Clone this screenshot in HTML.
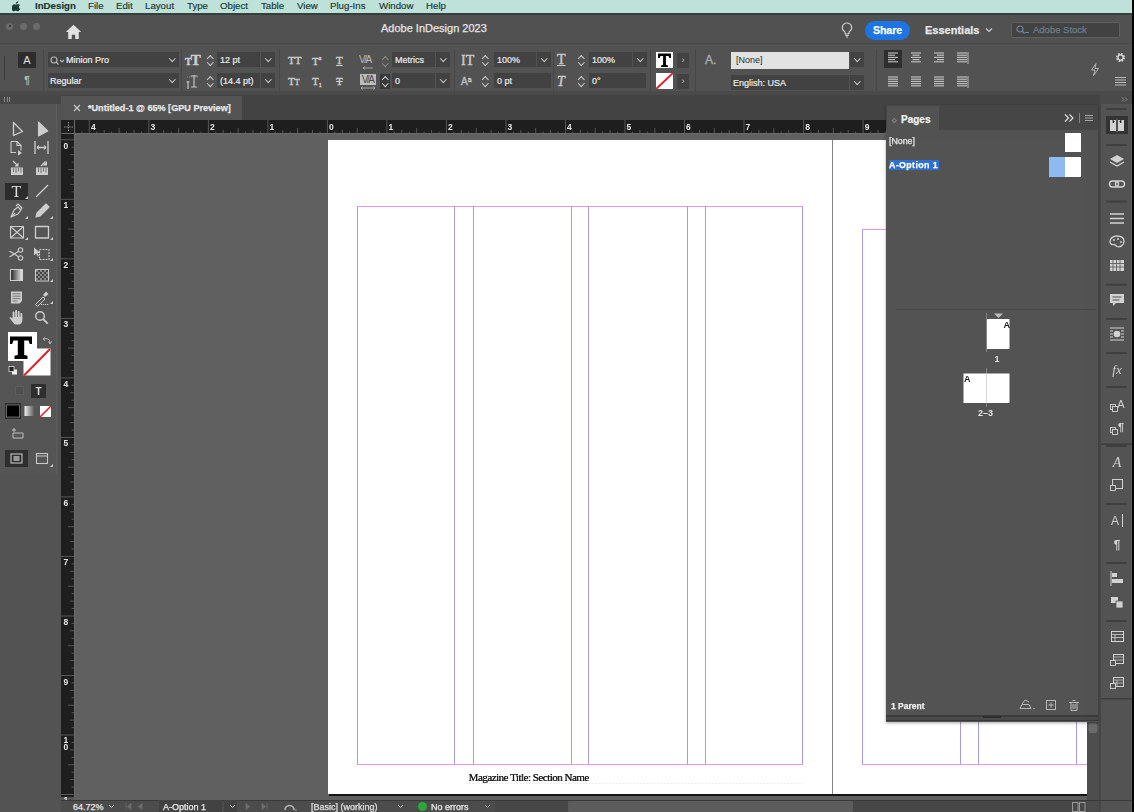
<!DOCTYPE html>
<html><head><meta charset="utf-8">
<style>
*{margin:0;padding:0;box-sizing:border-box}
html,body{-webkit-font-smoothing:antialiased;width:1134px;height:812px;overflow:hidden;background:#535353;font-family:"Liberation Sans",sans-serif;color:#e8e8e8}
.a{position:absolute}
svg{will-change:transform}
#ctl,#appbar,#tab,#pages,#status,#menubar{opacity:0.999}
#pages div,#status div,#tab div,#appbar div,.f{-webkit-text-stroke-width:0.25px}
#menubar{left:0;top:0;width:1134px;height:13px;background:#bfe2db}
#menuline{left:0;top:13px;width:1134px;height:1.5px;background:#33403d}
#menubar span{position:absolute;top:0;font-size:9.7px;-webkit-text-stroke:0.15px #193833;line-height:12.5px;color:#193833}
#appbar{left:0;top:14.5px;width:1134px;height:28.5px;background:#525252}

.f{position:absolute;background:#434343;height:15px;font-size:9px;line-height:17px;color:#ececec;-webkit-text-stroke:0.2px #ececec;padding-left:3px;white-space:nowrap;overflow:hidden}
.dd{position:absolute;background:#434343;height:15px;width:14px}
.dd:after{content:"";position:absolute;left:4.5px;top:4px;width:3.5px;height:3.5px;border-right:1.2px solid #cfcfcf;border-bottom:1.2px solid #cfcfcf;transform:rotate(45deg)}
.st{position:absolute;width:10px;height:15px}
.st:before{content:"";position:absolute;left:2.5px;top:3.5px;width:3.5px;height:3.5px;border-left:1.3px solid #d0d0d0;border-top:1.3px solid #d0d0d0;transform:rotate(45deg)}
.st:after{content:"";position:absolute;left:2.5px;top:7.5px;width:3.5px;height:3.5px;border-right:1.3px solid #d0d0d0;border-bottom:1.3px solid #d0d0d0;transform:rotate(45deg)}
.vs{position:absolute;width:1px;background:#484848}
.ic{position:absolute;color:#cdcdcd;font-family:"Liberation Serif",serif;line-height:1;-webkit-text-stroke:0.4px #cdcdcd}
.tl{width:7px;height:7px;border-radius:50%;background:#6c6c6c}
#ctl{left:0;top:43px;width:1134px;height:51px;background:#535353;border-top:1px solid #474747}
#strip{left:0;top:91px;width:1134px;height:4px;background:#4a4a4a}
#tools{left:0;top:95px;width:61px;height:717px;background:#535353}
#tabbar{left:61px;top:95px;width:1040px;height:25px;background:#434343}
#tab{left:61px;top:96px;width:181px;height:24px;background:#555555}
#hruler{left:61px;top:119px;width:1026px;height:15px;background:#1e1e1e}
#vruler{left:61px;top:134px;width:13px;height:663px;background:#1e1e1e}
#paste{left:74px;top:134px;width:1013px;height:666px;background:#606060}
#page1{left:328px;top:140px;width:504px;height:654px;background:#fff}
#spine{left:832px;top:140px;width:1px;height:654px;background:#6a6a6a}
#page2{left:833px;top:140px;width:254px;height:654px;background:#fff}
#vscroll{left:1087px;top:119px;width:12px;height:678px;background:#4a4a4a}
#rstrip{left:1099px;top:95px;width:35px;height:702px;background:#535353}
#pages{left:886px;top:105px;width:212px;height:617px;background:#535353;box-shadow:0 1px 3px rgba(0,0,0,.35)}
#status{left:61px;top:800px;width:1038px;height:12px;background:#4d4d4d}
</style></head><body>
<div id="menubar" class="a">
<svg class="a" style="left:12px;top:1px" width="9" height="11" viewBox="0 0 9 11"><path d="M6.2 0.2c0.1 0.8-0.3 1.6-0.8 2.1-0.5 0.5-1.2 0.8-1.9 0.7-0.1-0.7 0.3-1.5 0.8-2 0.5-0.5 1.3-0.8 1.9-0.8zM8.6 7.9c-0.3 0.7-0.5 1-0.9 1.6-0.5 0.8-1.3 1.7-2.2 1.7-0.8 0-1-0.5-2.1-0.5-1.1 0-1.3 0.5-2.1 0.5C0.4 11.2-0.4 10.2-0.9 9.4c0 0 0 0 0 0C-2.2 7.2 0.1 3.4 1.6 3.4c0.9 0 1.5 0.5 2.2 0.5 0.7 0 1.1-0.5 2.2-0.5 0.8 0 1.6 0.4 2.1 1.2-1.9 1-1.6 3.7 0.5 4.3z" transform="translate(0.6,0) scale(0.92)" fill="#1d3a35"/></svg>
<span style="left:35px;font-weight:bold">InDesign</span>
<span style="left:88px">File</span>
<span style="left:116px">Edit</span>
<span style="left:145px">Layout</span>
<span style="left:187px">Type</span>
<span style="left:220px">Object</span>
<span style="left:261px">Table</span>
<span style="left:297px">View</span>
<span style="left:330px">Plug-Ins</span>
<span style="left:379px">Window</span>
<span style="left:426px">Help</span>
</div>
<div id="menuline" class="a"></div>
<div id="appbar" class="a">
<div class="a tl" style="left:6px;top:8.3px"></div><div class="a" style="left:8.5px;top:10.8px;width:2px;height:2px;border-radius:1px;background:#2a2a2a"></div>
<div class="a tl" style="left:19.5px;top:8.3px"></div>
<div class="a tl" style="left:32.5px;top:8.3px"></div>
<svg class="a" style="left:65px;top:9px" width="17" height="16" viewBox="0 0 17 16"><path d="M8.5 0.8L0.8 8h2.4v7h3.6v-4.2h3.4V15h3.6V8h2.4z" fill="#e2e2e2"/></svg>
<div class="a" style="left:381px;top:6px;font-size:11px;color:#e6e6e6;line-height:14px">Adobe InDesign 2023</div>
<svg class="a" style="left:841px;top:7px" width="12" height="16" viewBox="0 0 12 16"><path d="M6 1a4.6 4.6 0 0 0-2.6 8.4c0.5 0.4 0.8 1 0.8 1.6V12h3.6v-1c0-0.6 0.3-1.2 0.8-1.6A4.6 4.6 0 0 0 6 1z" fill="none" stroke="#cfcfcf" stroke-width="1.2"/><path d="M4.4 13.5h3.2M5 15h2" stroke="#cfcfcf" stroke-width="1.1"/></svg>
<div class="a" style="left:865px;top:6px;width:45px;height:19px;border-radius:9.5px;background:#1d76e4;color:#fff;font-weight:bold;font-size:10.5px;line-height:19px;text-align:center">Share</div>
<div class="a" style="left:925px;top:7px;font-size:11px;font-weight:bold;color:#e8e8e8;line-height:16px">Essentials</div>
<svg class="a" style="left:985px;top:12px" width="8" height="6" viewBox="0 0 8 6"><path d="M1 1.5l3 3 3-3" fill="none" stroke="#d0d0d0" stroke-width="1.2"/></svg>
<div class="a" style="left:1011px;top:7px;width:109px;height:16px;background:#434343;border:1px solid #606060;border-radius:2px"></div>
<svg class="a" style="left:1016px;top:10px" width="14" height="10" viewBox="0 0 14 10"><circle cx="4" cy="4" r="3" fill="none" stroke="#6f8aa3" stroke-width="1.2"/><path d="M6 6l2.5 2.5M9 7.5h4" stroke="#6f8aa3" stroke-width="1.2"/></svg>
<div class="a" style="left:1033px;top:8px;font-size:9.5px;color:#6d7f8f;line-height:14px">Adobe Stock</div>
</div>
<div id="ctl" class="a">
<div class="a" style="left:4px;top:12px;width:1px;height:24px;background:#3c3c3c"></div>
<div class="a" style="left:18px;top:8px;width:18px;height:16px;background:#2e2e2e;border-radius:1px"></div>
<div class="a" style="left:18px;top:9px;width:18px;font-size:11px;line-height:14px;color:#e0e0e0;text-align:center">A</div>
<div class="a" style="left:18px;top:31px;width:18px;font-size:10px;line-height:12px;color:#bdbdbd;text-align:center;font-weight:bold">&para;</div>
<div class="vs" style="left:43px;top:5px;height:42px"></div>
<div class="f" style="left:48px;top:8px;width:117px;padding-left:18px">Minion Pro</div>
<svg class="a" style="left:50px;top:12px" width="16" height="10" viewBox="0 0 16 10"><circle cx="4" cy="4" r="3" fill="none" stroke="#bbb" stroke-width="1.1"/><path d="M6.2 6.2l2.3 2.3M10 4l2 2 2-2" fill="none" stroke="#bbb" stroke-width="1.1"/></svg>
<div class="dd" style="left:165px;top:8px"></div>
<div class="f" style="left:48px;top:29px;width:117px;padding-left:2px">Regular</div>
<div class="dd" style="left:165px;top:29px"></div>
<div class="vs" style="left:181px;top:5px;height:42px"></div>
<div class="ic" style="left:185px;top:9px;font-size:15px;letter-spacing:-1px;font-weight:bold;color:#cfcfcf"><span style="font-size:10px">T</span>T</div>
<svg class="a" style="left:185px;top:29px" width="16" height="17" viewBox="0 0 16 17"><path d="M9 2v12M5.5 3h7M6 14h6M3 8v8M1.5 9h3" stroke="#c4c4c4" stroke-width="1.2" fill="none"/><path d="M2 4h12" stroke="#9a9a9a" stroke-width="0.8" stroke-dasharray="1 1"/></svg>
<div class="st" style="left:205px;top:8px"></div>
<div class="f" style="left:217px;top:8px;width:43px">12 pt</div>
<div class="dd" style="left:261px;top:8px"></div>
<div class="st" style="left:205px;top:29px"></div>
<div class="f" style="left:217px;top:29px;width:43px">(14.4 pt)</div>
<div class="dd" style="left:261px;top:29px"></div>
<div class="vs" style="left:279px;top:5px;height:42px"></div>
<div class="ic" style="left:288px;top:11px;font-size:11px;letter-spacing:0px">TT</div>
<div class="ic" style="left:312px;top:11px;font-size:11px">T<span style="font-size:6px;vertical-align:5px">a</span></div>
<div class="ic" style="left:336px;top:11px;font-size:11px;text-decoration:underline">T</div>
<div class="ic" style="left:288px;top:32px;font-size:11px">T<span style="font-size:8px">T</span></div>
<div class="ic" style="left:312px;top:32px;font-size:11px">T<span style="font-size:6px;vertical-align:-2px">1</span></div>
<div class="ic" style="left:336px;top:32px;font-size:11px;text-decoration:line-through">T</div>
<div class="a" style="left:359px;top:10px;font-size:10px;color:#bdbdbd;letter-spacing:-1.5px;line-height:12px">V/A</div>
<svg class="a" style="left:362px;top:22px" width="12" height="4" viewBox="0 0 12 4"><path d="M1 2h10M1 2l2-1.5M1 2l2 1.5" stroke="#aaa" stroke-width="0.9" fill="none"/></svg>
<div class="a" style="left:360px;top:30px;width:16px;height:11px;background:#bdbdbd"></div>
<div class="a" style="left:359px;top:30px;width:17px;font-size:10px;color:#4a4a4a;letter-spacing:-1.5px;line-height:11px;text-align:center">V/A</div>
<svg class="a" style="left:360px;top:42px" width="16" height="4" viewBox="0 0 16 4"><path d="M1 2h14M1 2l2-1.5M1 2l2 1.5M15 2l-2-1.5M15 2l-2 1.5" stroke="#aaa" stroke-width="0.9" fill="none"/></svg>
<div class="st" style="left:380px;top:9px;opacity:.45"></div>
<div class="f" style="left:392px;top:8px;width:43px">Metrics</div>
<div class="dd" style="left:436px;top:8px"></div>
<div class="a" style="left:380px;top:30px;width:10px;height:15px;background:#3a3a3a"></div>
<div class="st" style="left:380px;top:29px"></div>
<div class="f" style="left:392px;top:29px;width:43px">0</div>
<div class="dd" style="left:436px;top:29px"></div>
<div class="vs" style="left:454px;top:5px;height:42px"></div>
<div class="ic" style="left:461px;top:10px;font-size:14px">IT</div>
<div class="ic" style="left:461px;top:32px;font-size:10px;font-family:'Liberation Sans',sans-serif;color:#a8a8a8">A<span style="font-size:7px;vertical-align:3px">a</span></div>
<div class="st" style="left:480px;top:8px"></div>
<div class="f" style="left:494px;top:8px;width:42px">100%</div>
<div class="dd" style="left:537px;top:8px"></div>
<div class="st" style="left:480px;top:29px"></div>
<div class="f" style="left:494px;top:29px;width:57px">0 pt</div>
<div class="vs" style="left:553px;top:5px;height:42px"></div>
<div class="ic" style="left:557px;top:9px;font-size:14px;text-decoration:underline">T</div>
<div class="ic" style="left:557px;top:31px;font-size:14px;font-style:italic">T</div>
<div class="st" style="left:576px;top:8px"></div>
<div class="f" style="left:589px;top:8px;width:43px">100%</div>
<div class="dd" style="left:633px;top:8px"></div>
<div class="st" style="left:576px;top:29px"></div>
<div class="f" style="left:589px;top:29px;width:57px">0&deg;</div>
<div class="vs" style="left:650px;top:5px;height:42px"></div>
<div class="a" style="left:656px;top:8px;width:17px;height:16px;background:#fff"></div>
<svg class="a" style="left:656px;top:8px" width="17" height="16" viewBox="0 0 17 16"><path d="M2 1.5h13v4.5h-1.6l-.9-2h-2.6v8.8l2 .6v1.6H5.1v-1.6l2-.6V4H4.5l-.9 2H2z" fill="#000"/></svg>
<div class="a" style="left:677px;top:9px;width:12px;height:15px;background:#434343;font-size:9px;line-height:15px;text-align:center;color:#ccc">&rsaquo;</div>
<svg class="a" style="left:656px;top:29px" width="17" height="16" viewBox="0 0 17 16"><rect width="17" height="16" fill="#fff"/><path d="M0 16L17 0" stroke="#e0202a" stroke-width="2"/></svg>
<div class="a" style="left:677px;top:30px;width:12px;height:15px;background:#434343;font-size:9px;line-height:15px;text-align:center;color:#ccc">&rsaquo;</div>
<div class="vs" style="left:695px;top:5px;height:42px"></div>
<div class="a" style="left:705px;top:10px;font-size:12px;color:#b0b0b0;line-height:12px;-webkit-text-stroke:0.3px #b0b0b0">A.</div>
<div class="a" style="left:731px;top:8px;width:118px;height:17px;background:#e3e3e3;font-size:9px;line-height:17px;color:#2a2a2a;padding-left:5px">[None]</div>
<div class="dd" style="left:850px;top:8px"></div>
<div class="f" style="left:731px;top:31px;width:118px;padding-left:2px">English: USA</div>
<div class="dd" style="left:850px;top:31px"></div>
<div class="vs" style="left:876px;top:5px;height:42px"></div>
<div class="a" style="left:884px;top:6px;width:18px;height:18px;background:#2f2f2f;border-radius:1px"></div>
<svg class="a" style="left:888px;top:8px" width="12" height="12" viewBox="0 0 12 12"><g stroke="#c6c6c6" stroke-width="1.1"><path d="M0 1.0h10" /><path d="M0 3.2h7" /><path d="M0 5.4h10" /><path d="M0 7.6000000000000005h7" /><path d="M0 9.8h10" /></g></svg><svg class="a" style="left:911px;top:8px" width="12" height="12" viewBox="0 0 12 12"><g stroke="#c6c6c6" stroke-width="1.1"><path d="M0.0 1.0h10" /><path d="M1.5 3.2h7" /><path d="M0.0 5.4h10" /><path d="M1.5 7.6000000000000005h7" /><path d="M0.0 9.8h10" /></g></svg><svg class="a" style="left:934px;top:8px" width="12" height="12" viewBox="0 0 12 12"><g stroke="#c6c6c6" stroke-width="1.1"><path d="M0 1.0h10" /><path d="M3 3.2h7" /><path d="M0 5.4h10" /><path d="M3 7.6000000000000005h7" /><path d="M0 9.8h10" /></g></svg><svg class="a" style="left:957px;top:8px" width="12" height="12" viewBox="0 0 12 12"><g stroke="#c6c6c6" stroke-width="1.1"><path d="M0 1.0h10" /><path d="M0 3.2h10" /><path d="M0 5.4h10" /><path d="M0 7.6000000000000005h10" /><path d="M0 9.8h10" /><path d="M11 0v12" stroke-width="0.9"/></g></svg><svg class="a" style="left:888px;top:32px" width="12" height="12" viewBox="0 0 12 12"><g stroke="#c6c6c6" stroke-width="1.1"><path d="M0 1.0h10" /><path d="M0 3.2h10" /><path d="M0 5.4h10" /><path d="M0 7.6000000000000005h10" /><path d="M0 9.8h10" /></g></svg><svg class="a" style="left:911px;top:32px" width="12" height="12" viewBox="0 0 12 12"><g stroke="#c6c6c6" stroke-width="1.1"><path d="M0 1.0h10" /><path d="M0 3.2h10" /><path d="M0 5.4h10" /><path d="M0 7.6000000000000005h10" /><path d="M0 9.8h10" /></g></svg><svg class="a" style="left:934px;top:32px" width="12" height="12" viewBox="0 0 12 12"><g stroke="#c6c6c6" stroke-width="1.1"><path d="M0 1.0h10" /><path d="M0 3.2h10" /><path d="M0 5.4h10" /><path d="M0 7.6000000000000005h10" /><path d="M0 9.8h10" /></g></svg><svg class="a" style="left:957px;top:32px" width="12" height="12" viewBox="0 0 12 12"><g stroke="#c6c6c6" stroke-width="1.1"><path d="M0 1.0h10" /><path d="M0 3.2h10" /><path d="M0 5.4h10" /><path d="M0 7.6000000000000005h10" /><path d="M0 9.8h10" /><path d="M11 0v12" stroke-width="0.9"/></g></svg>
<svg class="a" style="left:1090px;top:19px" width="10" height="13" viewBox="0 0 10 13"><path d="M6 0.5L1.5 7h3.5L3.5 12.5 8.5 5.5H5z" fill="none" stroke="#bdbdbd" stroke-width="0.9"/></svg>
<svg class="a" style="left:1115px;top:8px" width="11" height="11" viewBox="0 0 11 11"><circle cx="5.5" cy="5.5" r="3.4" fill="none" stroke="#d5d5d5" stroke-width="2.2" stroke-dasharray="1.6 1.07"/><circle cx="5.5" cy="5.5" r="2.6" fill="none" stroke="#d5d5d5" stroke-width="1.2"/></svg>
<svg class="a" style="left:1115px;top:32px" width="11" height="10" viewBox="0 0 11 10"><path d="M0 1.5h11M0 4h11M0 6.5h11M0 9h11" stroke="#bdbdbd" stroke-width="1.1"/></svg>
</div>
<div id="strip" class="a"></div>
<div id="tools" class="a">
<div class="a" style="left:0;top:0;width:61px;height:9px;background:#474747"></div>
<div class="a" style="left:4px;top:2px;width:1px;height:5px;background:#888"></div><div class="a" style="left:7px;top:2px;width:3px;height:5px;border-left:1px solid #888;border-right:1px solid #888"></div>
<div class="a" style="left:20px;top:14px;width:20px;height:2px;background:#3c3c3c;border-radius:1px"></div>
<div class="a" style="left:0;top:9px;width:57px;height:371px;background:#555555;border-right:1px solid #5d5d5d"></div>
<svg class="a" style="left:0;top:0" width="61" height="400" viewBox="0 95 61 400">
<g fill="none" stroke="#cdcdcd" stroke-width="1.1" stroke-linejoin="round">
<path d="M13.5 122.5V135.5l9-4z" stroke-width="1.3"/>
<path d="M38.5 122V136l9.2-5z" fill="#cdcdcd"/>
<path d="M11 141.5h6l4 4v5M11 141.5v11h5" /><path d="M17 141.5v4h4"/><path d="M18 150l4 3-4 2.5z" fill="#cdcdcd" stroke="none"/>
<path d="M35 141v13M48 141v13M37 147.5h9" stroke-width="1.3"/><path d="M37 147.5l2-1.8M37 147.5l2 1.8M46 147.5l-2-1.8M46 147.5l-2 1.8"/>
<path d="M11 167.5h12v7.5h-12z" fill="#cdcdcd" stroke="none"/><path d="M13.5 168v4M16 168v5M18.5 168v3.5M21 168v4.5" stroke="#666" stroke-width="0.9"/><path d="M13 161l4.5 4.5" stroke-width="1.3"/><path d="M18.5 162.5v4h-4z" fill="#cdcdcd" stroke="none"/>
<path d="M36 167.5h12v7.5h-12z" fill="#cdcdcd" stroke="none"/><path d="M38.5 168v4M41 168v5M43.5 168v3.5M46 168v4.5" stroke="#666" stroke-width="0.9"/><path d="M41 166l4.5-4.5" stroke-width="1.3"/><path d="M47 161v4.5h-4.5z" fill="#cdcdcd" stroke="none"/>
<path d="M36 197l12-12" stroke-width="1.2"/>
<path d="M11 217l3-7 4-3 3 3-3 4z"/><path d="M16 206l2-2 4 4-2 2"/><path d="M11 217l4-4"/>
<path d="M36 217l1-4 9-9 3 3-9 9z" fill="#cdcdcd"/>
<rect x="10.5" y="226.5" width="13" height="11.5"/><path d="M10.5 226.5l13 11.5M23.5 226.5l-13 11.5"/>
<rect x="35.5" y="226.5" width="13" height="11.5" stroke-width="1.3"/>
<circle cx="20.5" cy="250" r="2.2"/><circle cx="20.5" cy="258" r="2.2"/><path d="M18.6 251.2L9.5 257M18.6 256.8L9.5 251" stroke-width="1.2"/>
<path d="M39.5 249.5h9.5v10h-9.5z" stroke-dasharray="2 1"/><path d="M34 247.5v8l2.2-2 1.6 3 1.2-.6-1.5-2.8h3z" fill="#cdcdcd" stroke="none"/>
<rect x="10.5" y="269.5" width="12" height="11" fill="url(#gr)"/>
<rect x="35.5" y="269.5" width="13" height="11.5" fill="#444"/><path d="M36 270h2v2h-2zM40 270h2v2h-2zM44 270h2v2h-2zM38 272h2v2h-2zM42 272h2v2h-2zM46 272h2v2h-2zM36 274h2v2h-2zM40 274h2v2h-2zM44 274h2v2h-2zM38 276h2v2h-2zM42 276h2v2h-2zM46 276h2v2h-2zM36 278h2v2h-2zM40 278h2v2h-2zM44 278h2v2h-2z" fill="#8a8a8a" stroke="none"/>
<path d="M11 291.5h11v9.5l-2.5 2.5H11z" fill="#cdcdcd" stroke="none"/><path d="M12.5 293.8h8M12.5 296.2h8M12.5 298.6h8M12.5 301h5" stroke="#6a6a6a" stroke-width="0.9"/>
<path d="M35.5 304.5l7.5-7.5 2 2-7.5 7.5z" stroke-width="1"/><path d="M43 295l3-3.5 2.5 2.5-3.5 3z" fill="#cdcdcd" stroke="none"/><path d="M41 304.5h8" stroke-dasharray="1.2 0.8" stroke-width="1.2"/>
<g fill="#cdcdcd" stroke="none"><rect x="12.6" y="311.5" width="1.9" height="8" rx="0.9"/><rect x="15.2" y="310" width="1.9" height="9" rx="0.9"/><rect x="17.8" y="311" width="1.9" height="8.5" rx="0.9"/><rect x="20.4" y="313" width="1.9" height="7" rx="0.9"/><path d="M12.6 317h9.7v3.5c0 2-1.5 4-3.5 4h-3c-1.5 0-2.5-1.5-3.5-3l-2.6-3.2c-.5-.7.4-1.5 1.1-1l1.8 1.4z"/></g>
<circle cx="40" cy="316" r="4.3" stroke-width="1.4"/><path d="M43.2 319.2l4.5 4.5" stroke-width="1.9"/>
</g>
<defs><linearGradient id="gr"><stop offset="0" stop-color="#222"/><stop offset="1" stop-color="#eee"/></linearGradient></defs>
<g fill="#cdcdcd">
<path d="M28 199l-3 0 3-3z"/><path d="M28 219l-3 0 3-3z"/><path d="M53 219l-3 0 3-3z"/><path d="M28 240l-3 0 3-3z"/><path d="M53 240l-3 0 3-3z"/><path d="M53 261l-3 0 3-3z"/><path d="M53 282l-3 0 3-3z"/><path d="M53 304l-3 0 3-3z"/>
</g>
</svg>
<div class="a" style="left:5px;top:88px;width:23px;height:17px;background:#2c2c2c"></div>
<div class="a" style="left:5px;top:88px;width:23px;font-family:'Liberation Serif',serif;font-size:16px;line-height:18px;color:#dedede;text-align:center">T</div>
<svg class="a" style="left:0;top:0" width="61" height="400" viewBox="0 95 61 400">
<path d="M28 199l-3 0 3-3z" fill="#cdcdcd"/>
<rect x="23.5" y="348.5" width="27" height="27" fill="#fff"/><path d="M24 375.5l26-26.5" stroke="#e0202a" stroke-width="2"/>
<rect x="8" y="332" width="29" height="29" fill="#fff"/>
<path d="M10 336.5h22v7.5h-2.2l-1.3-3.5h-4.3v14.5l3.3 0.8v3.2h-13v-3.2l3.3-0.8v-14.5h-4.3l-1.3 3.5H10z" fill="#000"/>
<path d="M44 339c3-1 6 0 6 4M48.5 341.5l1.5 2.5 1.5-2.5M45 337.5l-2 1.5 2 1.5" fill="none" stroke="#bbb" stroke-width="1"/>
<rect x="12" y="369.5" width="5" height="5" fill="#eee"/><rect x="9" y="366.5" width="5" height="5" fill="#222" stroke="#ddd" stroke-width="0.8"/>
<rect x="15.5" y="386.5" width="8" height="8" fill="#4f4f4f" stroke="#5d5d5d"/>
<rect x="31" y="384" width="15" height="14" fill="#2e2e2e"/>
<text x="38.5" y="395" font-family="Liberation Sans" font-size="10" font-weight="bold" fill="#ddd" text-anchor="middle">T</text>
<rect x="5" y="403" width="16" height="16" fill="#2e2e2e"/><rect x="6.5" y="405" width="13" height="12" fill="#000" stroke="#777" stroke-width="0.8"/>
<rect x="24.5" y="406" width="10" height="10" fill="url(#gr2)"/>
<rect x="40" y="406" width="11" height="11" fill="#fff"/><path d="M40 417l11-11" stroke="#e0202a" stroke-width="1.6"/>
<defs><linearGradient id="gr2"><stop offset="0" stop-color="#eee"/><stop offset="1" stop-color="#555"/></linearGradient></defs>
<g fill="none" stroke="#c0c0c0" stroke-width="1"><path d="M12 430h4M14 428v4M13 433h10v5h-10z"/></g>
<rect x="5" y="450" width="23" height="17" fill="#2e2e2e"/>
<rect x="11" y="454" width="11" height="9" fill="none" stroke="#c6c6c6" stroke-width="1.1"/><rect x="13.5" y="456" width="6" height="5" fill="#9a9a9a"/>
<rect x="36.5" y="453.5" width="11" height="10" fill="none" stroke="#c6c6c6" stroke-width="1.1"/><path d="M36.5 456h11" stroke="#c6c6c6"/><path d="M53 467l-3 0 3-3z" fill="#cdcdcd"/>
</svg>
</div>
<div id="tabbar" class="a"></div>
<div id="tab" class="a">
<svg class="a" style="left:12px;top:8px" width="8" height="8" viewBox="0 0 8 8"><path d="M1 1l6 6M7 1L1 7" stroke="#cfcfcf" stroke-width="1.1"/></svg>
<div class="a" style="left:27px;top:5px;font-size:9.1px;font-weight:bold;color:#e8e8e8;line-height:14px;white-space:nowrap">*Untitled-1 @ 65% [GPU Preview]</div>
</div>

<div id="paste" class="a"></div>
<svg class="a" style="left:0;top:0" width="1134" height="812" viewBox="0 0 1134 812">
<rect x="61" y="120" width="1026" height="13" fill="#1e1e1e"/>
<rect x="61" y="134" width="13" height="663" fill="#1e1e1e"/>
<rect x="61" y="133" width="1026" height="1" fill="#6a6a6a"/>
<rect x="74" y="134" width="1" height="663" fill="#6a6a6a"/>
<path d="M81.9 131.5V133M89.3 120V133M96.8 131.5V133M104.2 130V133M111.6 131.5V133M119.1 128V133M126.5 131.5V133M134.0 130V133M141.4 131.5V133M148.8 120V133M156.3 131.5V133M163.7 130V133M171.2 131.5V133M178.6 128V133M186.0 131.5V133M193.5 130V133M200.9 131.5V133M208.4 120V133M215.8 131.5V133M223.2 130V133M230.7 131.5V133M238.1 128V133M245.6 131.5V133M253.0 130V133M260.4 131.5V133M267.9 120V133M275.3 131.5V133M282.8 130V133M290.2 131.5V133M297.6 128V133M305.1 131.5V133M312.5 130V133M320.0 131.5V133M327.4 120V133M334.8 131.5V133M342.3 130V133M349.7 131.5V133M357.2 128V133M364.6 131.5V133M372.0 130V133M379.5 131.5V133M386.9 120V133M394.4 131.5V133M401.8 130V133M409.2 131.5V133M416.7 128V133M424.1 131.5V133M431.6 130V133M439.0 131.5V133M446.4 120V133M453.9 131.5V133M461.3 130V133M468.8 131.5V133M476.2 128V133M483.6 131.5V133M491.1 130V133M498.5 131.5V133M506.0 120V133M513.4 131.5V133M520.8 130V133M528.3 131.5V133M535.7 128V133M543.2 131.5V133M550.6 130V133M558.0 131.5V133M565.5 120V133M572.9 131.5V133M580.4 130V133M587.8 131.5V133M595.2 128V133M602.7 131.5V133M610.1 130V133M617.6 131.5V133M625.0 120V133M632.4 131.5V133M639.9 130V133M647.3 131.5V133M654.8 128V133M662.2 131.5V133M669.6 130V133M677.1 131.5V133M684.5 120V133M692.0 131.5V133M699.4 130V133M706.8 131.5V133M714.3 128V133M721.7 131.5V133M729.2 130V133M736.6 131.5V133M744.0 120V133M751.5 131.5V133M758.9 130V133M766.4 131.5V133M773.8 128V133M781.2 131.5V133M788.7 130V133M796.1 131.5V133M803.6 120V133M811.0 131.5V133M818.4 130V133M825.9 131.5V133M833.3 128V133M840.8 131.5V133M848.2 130V133M855.6 131.5V133M863.1 120V133M870.5 131.5V133M878.0 130V133M885.4 131.5V133M892.8 128V133M900.3 131.5V133M907.7 130V133M915.2 131.5V133M922.6 120V133M930.0 131.5V133M937.5 130V133M944.9 131.5V133M952.4 128V133M959.8 131.5V133M967.2 130V133M974.7 131.5V133M982.1 120V133M989.6 131.5V133M997.0 130V133M1004.4 131.5V133M1011.9 128V133M1019.3 131.5V133M1026.8 130V133M1034.2 131.5V133M1041.6 120V133M1049.1 131.5V133M1056.5 130V133M1064.0 131.5V133M1071.4 128V133M1078.8 131.5V133M61 139.8H74M71.5 147.2H74M70 154.7H74M71.5 162.1H74M68 169.6H74M71.5 177.0H74M70 184.4H74M71.5 191.9H74M61 199.3H74M71.5 206.8H74M70 214.2H74M71.5 221.6H74M68 229.1H74M71.5 236.5H74M70 244.0H74M71.5 251.4H74M61 258.8H74M71.5 266.3H74M70 273.7H74M71.5 281.2H74M68 288.6H74M71.5 296.0H74M70 303.5H74M71.5 310.9H74M61 318.4H74M71.5 325.8H74M70 333.2H74M71.5 340.7H74M68 348.1H74M71.5 355.6H74M70 363.0H74M71.5 370.4H74M61 377.9H74M71.5 385.3H74M70 392.8H74M71.5 400.2H74M68 407.6H74M71.5 415.1H74M70 422.5H74M71.5 430.0H74M61 437.4H74M71.5 444.8H74M70 452.3H74M71.5 459.7H74M68 467.2H74M71.5 474.6H74M70 482.0H74M71.5 489.5H74M61 496.9H74M71.5 504.4H74M70 511.8H74M71.5 519.2H74M68 526.7H74M71.5 534.1H74M70 541.6H74M71.5 549.0H74M61 556.4H74M71.5 563.9H74M70 571.3H74M71.5 578.8H74M68 586.2H74M71.5 593.6H74M70 601.1H74M71.5 608.5H74M61 616.0H74M71.5 623.4H74M70 630.8H74M71.5 638.3H74M68 645.7H74M71.5 653.2H74M70 660.6H74M71.5 668.0H74M61 675.5H74M71.5 682.9H74M70 690.4H74M71.5 697.8H74M68 705.2H74M71.5 712.7H74M70 720.1H74M71.5 727.6H74M61 735.0H74M71.5 742.4H74M70 749.9H74M71.5 757.3H74M68 764.8H74M71.5 772.2H74M70 779.6H74M71.5 787.1H74M61 794.5H74" stroke="#5c5c5c" stroke-width="0.9" fill="none"/>
<g font-family="Liberation Sans" font-size="8.5" font-weight="bold" fill="#e6e6e6"><text x="90.9" y="130" >4</text><text x="150.4" y="130" >3</text><text x="210.0" y="130" >2</text><text x="269.5" y="130" >1</text><text x="329.0" y="130" >0</text><text x="388.5" y="130" >1</text><text x="448.0" y="130" >2</text><text x="507.6" y="130" >3</text><text x="567.1" y="130" >4</text><text x="626.6" y="130" >5</text><text x="686.1" y="130" >6</text><text x="745.6" y="130" >7</text><text x="805.2" y="130" >8</text><text x="864.7" y="130" >9</text><text x="924.2" y="130" >10</text><text x="983.7" y="130" >11</text><text x="1043.2" y="130" >12</text><text x="63.5" y="148.8">0</text><text x="63.5" y="208.3">1</text><text x="63.5" y="267.8">2</text><text x="63.5" y="327.4">3</text><text x="63.5" y="386.9">4</text><text x="63.5" y="446.4">5</text><text x="63.5" y="505.9">6</text><text x="63.5" y="565.4">7</text><text x="63.5" y="625.0">8</text><text x="63.5" y="684.5">9</text><text x="63.5" y="743.0">1</text><text x="63.5" y="750.0">0</text><text x="63.5" y="802.5">1</text><text x="63.5" y="809.5">1</text></g>
<rect x="61" y="120" width="14" height="14" fill="#1e1e1e"/><path d="M64 127h9M68.5 122v10" stroke="#9a9a9a" stroke-width="0.9" stroke-dasharray="1.5 1"/><path d="M61.5 133.5h13.5M74.5 120v14" stroke="#6a6a6a"/>
</svg>
<svg class="a" style="left:0;top:0" width="1134" height="812" viewBox="0 0 1134 812">
<rect x="329" y="794" width="758" height="2" fill="#151515"/>
<rect x="328" y="140" width="504" height="654" fill="#fff"/>
<rect x="833" y="140" width="254" height="654" fill="#fff"/>
<rect x="832" y="140" width="1" height="654" fill="#858585"/>
<path d="M357 206.5H803M357 764.5H803" stroke="#e49ae9" stroke-width="1" fill="none"/>
<path d="M357.5 206.5V764.5M454.5 206.5V764.5M473.5 206.5V764.5M571.5 206.5V764.5M588.5 206.5V764.5M687.5 206.5V764.5M705.5 206.5V764.5M802.5 206.5V764.5" stroke="#ab99e6" stroke-width="1" fill="none"/>
<path d="M862 229.5H1087M862 764.5H1087" stroke="#e49ae9" stroke-width="1" fill="none"/>
<path d="M862.5 229.5V764.5M960.5 229.5V764.5M978.5 229.5V764.5M1076.5 229.5V764.5" stroke="#ab99e6" stroke-width="1" fill="none"/>
<path d="M466 783.5H803" stroke="#dfe4f2" stroke-width="0.8" stroke-dasharray="1.5 1.5" fill="none"/>
</svg>
<div class="a" style="left:468.5px;top:770px;font-family:'Liberation Serif',serif;font-size:11px;letter-spacing:-0.5px;color:#1a1a1a;line-height:14px;white-space:nowrap;text-shadow:0.35px 0 0 #1a1a1a">Magazine Title: Section Name</div>
<svg class="a" style="left:0;top:0" width="1134" height="812" viewBox="0 0 1134 812">
<rect x="1087" y="120" width="12" height="680" fill="#4e4e4e"/>
<rect x="1088.5" y="723" width="9" height="10" rx="3" fill="#6a6a6a"/>
</svg>
<svg class="a" style="left:0;top:0" width="1134" height="812" viewBox="0 0 1134 812">
<rect x="1099" y="95" width="35" height="717" fill="#535353"/>
<rect x="1099" y="95" width="2" height="717" fill="#474747"/>
<rect x="1131" y="95" width="1" height="717" fill="#5c5c5c"/>
<rect x="1101" y="95" width="31" height="9" fill="#4a4a4a"/>
<path d="M1122 97.5l2 2-2 2M1125 97.5l2 2-2 2" stroke="#999" stroke-width="0.8" fill="none"/>
<rect x="1106" y="108" width="21" height="2" rx="1" fill="#3f3f3f"/>
<rect x="1106" y="144" width="21" height="2" rx="1" fill="#3f3f3f"/>
<rect x="1106" y="200.6" width="21" height="2" rx="1" fill="#3f3f3f"/>
<rect x="1106" y="283.8" width="21" height="2" rx="1" fill="#3f3f3f"/>
<rect x="1106" y="318" width="21" height="2" rx="1" fill="#3f3f3f"/>
<rect x="1106" y="352" width="21" height="2" rx="1" fill="#3f3f3f"/>
<rect x="1106" y="386" width="21" height="2" rx="1" fill="#3f3f3f"/>
<rect x="1106" y="445" width="21" height="2" rx="1" fill="#3f3f3f"/>
<rect x="1106" y="503" width="21" height="2" rx="1" fill="#3f3f3f"/>
<rect x="1106" y="562" width="21" height="2" rx="1" fill="#3f3f3f"/>
<rect x="1106" y="620" width="21" height="2" rx="1" fill="#3f3f3f"/>
<rect x="1101" y="443.5" width="31" height="1.5" fill="#3e3e3e"/>
<rect x="1101" y="698" width="31" height="1.5" fill="#3e3e3e"/>
<rect x="1106" y="116" width="22" height="18" fill="#333"/>
<path d="M1110 120h6v11h-6zM1118 120h6v11h-6z" fill="#d2d2d2"/><path d="M1113 120v3l1.5-1.5M1121 120v3l-1.5-1.5" stroke="#333" stroke-width="0.8"/><path d="M1117 118v15" stroke="#777" stroke-width="0.8"/>
<path d="M1117 155l7 4-7 4-7-4z" fill="#d2d2d2"/><path d="M1110 162l7 4 7-4" fill="none" stroke="#d2d2d2" stroke-width="1.4"/>
<rect x="1109.5" y="181" width="9" height="6" rx="3" fill="none" stroke="#d2d2d2" stroke-width="1.4"/><rect x="1115.5" y="181" width="9" height="6" rx="3" fill="none" stroke="#d2d2d2" stroke-width="1.4"/>
<path d="M1110 214h14M1110 218.5h14M1110 223h14" stroke="#d2d2d2" stroke-width="1.6"/>
<path d="M1117 236c-4 0-7 2.5-7 5.5 0 2.5 2 3.5 3.5 3 1.5-.5 2 1 3.5 2 3 1 7-1 7-5s-3-5.5-7-5.5z" fill="none" stroke="#d2d2d2" stroke-width="1.3"/><circle cx="1114" cy="240" r="1" fill="#d2d2d2"/><circle cx="1118" cy="239" r="1" fill="#d2d2d2"/><circle cx="1121" cy="242" r="1" fill="#d2d2d2"/>
<rect x="1110" y="260" width="14" height="11" fill="#d2d2d2"/><path d="M1113 260v11M1116.5 260v11M1120 260v11M1110 263.5h14M1110 267h14" stroke="#535353" stroke-width="0.8"/>
<path d="M1110 294h14v9h-8l-3 3v-3h-3z" fill="#d2d2d2"/><path d="M1112.5 297h9M1112.5 300h7" stroke="#535353" stroke-width="1"/>
<path d="M1110 328h14M1110 331h3M1121 331h3M1110 334h3M1121 334h3M1110 337h3M1121 337h3M1110 340h14" stroke="#d2d2d2" stroke-width="1"/><circle cx="1117" cy="334" r="3.3" fill="#d2d2d2"/>
<text x="1117" y="374" font-family="Liberation Serif" font-style="italic" font-size="13" fill="#d2d2d2" text-anchor="middle">fx</text>
<text x="1121" y="408" font-family="Liberation Sans" font-size="11" fill="#d2d2d2" text-anchor="middle">A</text><rect x="1110.5" y="404.5" width="5" height="5" fill="none" stroke="#d2d2d2" stroke-width="0.9"/><rect x="1112.5" y="406.5" width="5" height="5" fill="#535353" stroke="#d2d2d2" stroke-width="0.9"/>
<text x="1121" y="431" font-family="Liberation Sans" font-weight="bold" font-size="11" fill="#d2d2d2" text-anchor="middle">&#182;</text><rect x="1110.5" y="427.5" width="5" height="5" fill="none" stroke="#d2d2d2" stroke-width="0.9"/><rect x="1112.5" y="429.5" width="5" height="5" fill="#535353" stroke="#d2d2d2" stroke-width="0.9"/>
<text x="1117" y="467" font-family="Liberation Serif" font-style="italic" font-size="14" fill="#d2d2d2" text-anchor="middle">A</text>
<rect x="1112.5" y="479.5" width="10" height="9" fill="none" stroke="#d2d2d2" stroke-width="1"/><rect x="1110.5" y="485.5" width="5" height="5" fill="#535353" stroke="#d2d2d2" stroke-width="0.9"/>
<text x="1115" y="525" font-family="Liberation Sans" font-size="12" fill="#d2d2d2" text-anchor="middle">A</text><path d="M1122.5 514v13" stroke="#d2d2d2" stroke-width="1"/>
<text x="1117" y="549" font-family="Liberation Sans" font-weight="bold" font-size="12" fill="#d2d2d2" text-anchor="middle">&#182;</text>
<path d="M1111 571v15" stroke="#d2d2d2" stroke-width="1"/><rect x="1112" y="573" width="5" height="4" fill="#d2d2d2"/><rect x="1112" y="579" width="11" height="4" fill="#d2d2d2"/>
<rect x="1111" y="597" width="7" height="6" fill="#d2d2d2"/><rect x="1116" y="601" width="7" height="7" fill="#d2d2d2" stroke="#535353" stroke-width="0.8"/>
<rect x="1111.5" y="631.5" width="12" height="10" fill="none" stroke="#d2d2d2" stroke-width="1"/><path d="M1111.5 634.5h12M1111.5 637.5h12M1115 634.5v7" stroke="#d2d2d2" stroke-width="0.8"/>
<rect x="1113.5" y="654.5" width="10" height="9" fill="none" stroke="#d2d2d2" stroke-width="1"/><path d="M1113.5 657h10M1113.5 660h10" stroke="#d2d2d2" stroke-width="0.7"/><rect x="1110.5" y="660.5" width="5" height="5" fill="#535353" stroke="#d2d2d2" stroke-width="0.9"/>
<rect x="1113.5" y="677.5" width="10" height="9" fill="none" stroke="#d2d2d2" stroke-width="1"/><path d="M1113.5 680h10M1113.5 683h10M1117 680v6" stroke="#d2d2d2" stroke-width="0.7"/><rect x="1110.5" y="683.5" width="5" height="5" fill="#535353" stroke="#d2d2d2" stroke-width="0.9"/>
</svg>
<div id="pages" class="a">
<div class="a" style="left:0;top:0;width:212px;height:25px;background:#474747"></div>
<div class="a" style="left:1px;top:1px;width:52px;height:24px;background:#535353"></div>
<div class="a" style="left:6px;top:10.5px;font-size:6px;color:#999;line-height:8px">&#9671;</div>
<div class="a" style="left:15px;top:7.5px;font-size:10px;font-weight:bold;color:#f0f0f0;line-height:14px">Pages</div>
<svg class="a" style="left:178px;top:8px" width="30" height="10" viewBox="0 0 30 10"><path d="M1 1.5l3.5 3.5L1 8.5M5.5 1.5L9 5l-3.5 3.5" fill="none" stroke="#e0e0e0" stroke-width="1.2"/><path d="M15.5 0v10" stroke="#8a8a8a" stroke-width="0.9"/><path d="M21 2.5h8M21 5h8M21 7.5h8" stroke="#a8a8a8" stroke-width="1"/></svg>
<div class="a" style="left:3px;top:29px;font-size:8.8px;color:#e8e8e8;line-height:14px">[None]</div>
<div class="a" style="left:179px;top:27.5px;width:16px;height:19.5px;background:#fff"></div>
<div class="a" style="left:3px;top:55px;width:50px;height:10px;background:#2f6fd0"></div>
<div class="a" style="left:3px;top:53px;font-size:8.8px;font-weight:bold;color:#fff;line-height:14px;letter-spacing:0.4px">A-Option 1</div>
<div class="a" style="left:162.5px;top:52px;width:16.5px;height:20px;background:#8fbaf0"></div>
<div class="a" style="left:179px;top:52px;width:16px;height:20px;background:#fff"></div>
<div class="a" style="left:10px;top:203.5px;width:200px;height:1px;background:#474747"></div>
<svg class="a" style="left:0;top:0" width="212" height="616" viewBox="886 105 212 616">
<path d="M986.5 313V352M986.5 368V407" stroke="#8a8a8a" stroke-width="0.9"/>
<path d="M994 313.5h9l-4.5 4.5z" fill="#bdbdbd"/>
<rect x="987" y="319" width="22.5" height="30" fill="#fff"/>
<rect x="963.5" y="373.5" width="46" height="29.5" fill="#fff"/>
<path d="M986.5 373.5V403" stroke="#bdbdbd" stroke-width="0.6"/>
<text x="1003.5" y="327.5" font-family="Liberation Sans" font-size="9" font-weight="bold" fill="#222">A</text>
<text x="964" y="382" font-family="Liberation Sans" font-size="9" font-weight="bold" fill="#222">A</text>
<text x="997" y="362" font-family="Liberation Sans" font-size="9" font-weight="bold" fill="#e6e6e6" text-anchor="middle">1</text>
<text x="985.5" y="416" font-family="Liberation Sans" font-size="9" font-weight="bold" fill="#e6e6e6" text-anchor="middle">2&#8211;3</text>
<g fill="none" stroke="#b8b8b8" stroke-width="1">
<path d="M1020 708.5h11l-2-4h-7z M1022 704l3-4 4 2" />
<rect x="1046.5" y="700.5" width="9" height="9"/><path d="M1051 702.5v5M1048.5 705h5"/>
<path d="M1069 702.5h10M1071 702.5v8h6v-8M1072.5 700.5h3M1073 704v5M1075 704v5"/>
</g>
<circle cx="1034" cy="708.5" r="0.7" fill="#b8b8b8"/>
</svg>
<div class="a" style="left:5px;top:594px;font-size:8.5px;font-weight:bold;color:#ededed;line-height:14px">1 Parent</div>
<div class="a" style="left:0;top:610px;width:212px;height:2px;background:#3c3c3c"></div>
<div class="a" style="left:0;top:612px;width:212px;height:4px;background:#4a4a4a;border-bottom:1px solid #383838"></div>
<div class="a" style="left:97px;top:611px;width:18px;height:2px;background:#2e2e2e"></div>
</div>
<div id="status" class="a">
<div class="a" style="left:0;top:0;width:1073px;height:1px;background:#3a3a3a"></div>
<div class="a" style="left:12px;top:1px;font-size:9px;color:#e6e6e6;line-height:12px">64.72%</div>
<svg class="a" style="left:47px;top:4px" width="7" height="5" viewBox="0 0 7 5"><path d="M1 1l2.5 2.5L6 1" fill="none" stroke="#ccc" stroke-width="1"/></svg>
<svg class="a" style="left:64px;top:3px" width="20" height="7" viewBox="0 0 20 7"><path d="M1 0.5v6M6 0.5L2.5 3.5 6 6.5zM17 0.5L13.5 3.5 17 6.5z" fill="#6e6e6e" stroke="#6e6e6e" stroke-width="0.8"/></svg>
<div class="a" style="left:98px;top:0;width:63px;height:12px;background:#434343"></div>
<div class="a" style="left:102px;top:1px;font-size:9px;color:#ececec;line-height:12px">A-Option 1</div>
<div class="a" style="left:163px;top:0;width:13px;height:12px;background:#434343"></div>
<svg class="a" style="left:168px;top:4px" width="7" height="5" viewBox="0 0 7 5"><path d="M1 1l2.5 2.5L6 1" fill="none" stroke="#ccc" stroke-width="1"/></svg>
<svg class="a" style="left:182px;top:3px" width="26" height="7" viewBox="0 0 26 7"><path d="M3 0.5L6.5 3.5 3 6.5zM19 0.5L22.5 3.5 19 6.5zM24 0.5v6" fill="#6e6e6e" stroke="#6e6e6e" stroke-width="0.8"/></svg>
<svg class="a" style="left:222px;top:1px" width="16" height="10" viewBox="0 0 16 10"><path d="M2 9a4.5 4.5 0 1 1 9 0" fill="none" stroke="#bdbdbd" stroke-width="1.6"/><circle cx="13" cy="9" r="0.7" fill="#bbb"/></svg>
<div class="a" style="left:250px;top:1px;font-size:9px;color:#e0e0e0;line-height:12px">[Basic] (working)</div>
<svg class="a" style="left:336px;top:4px" width="7" height="5" viewBox="0 0 7 5"><path d="M1 1l2.5 2.5L6 1" fill="none" stroke="#ccc" stroke-width="1"/></svg>
<div class="a" style="left:357px;top:1.5px;width:9px;height:9px;border-radius:50%;background:#2ea83a"></div>
<div class="a" style="left:370px;top:1px;font-size:9px;color:#ececec;line-height:12px">No errors</div>
<svg class="a" style="left:423px;top:4px" width="7" height="5" viewBox="0 0 7 5"><path d="M1 1l2.5 2.5L6 1" fill="none" stroke="#999" stroke-width="1"/></svg>
<div class="a" style="left:434px;top:1px;width:73px;height:11px;background:#484848"></div><div class="a" style="left:507px;top:1px;width:285px;height:11px;background:#5d5d5d;border-radius:2px"></div><div class="a" style="left:792px;top:1px;width:234px;height:11px;background:#484848"></div>
<svg class="a" style="left:1011px;top:2px" width="14" height="10" viewBox="0 0 14 10"><rect x="0.5" y="0.5" width="5.5" height="9" fill="none" stroke="#9a9a9a"/><rect x="7.5" y="0.5" width="5.5" height="9" fill="none" stroke="#9a9a9a"/></svg>
</div>
<div class="a" style="left:1132px;top:0;width:2px;height:812px;background:#000"></div>
</body></html>
